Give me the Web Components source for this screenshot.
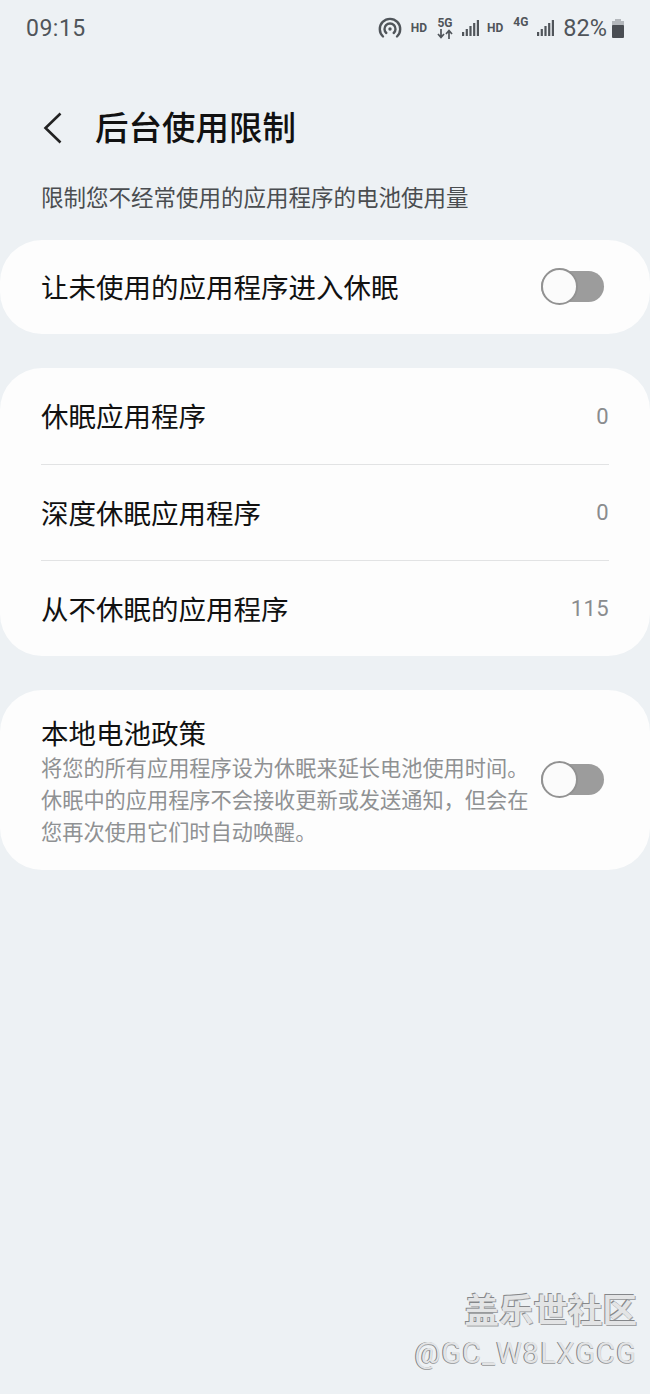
<!DOCTYPE html>
<html lang="zh">
<head>
<meta charset="utf-8">
<style>
  html, body { margin: 0; padding: 0; }
  body {
    width: 650px; height: 1394px; overflow: hidden; position: relative;
    background: #edf1f4; color: #111;
    font-family: "Noto Sans CJK SC", "Roboto", sans-serif;
  }
</style>
</head>
<body>
<status-bar></status-bar>
<page-header title="后台使用限制"></page-header>
<p-note>限制您不经常使用的应用程序的电池使用量</p-note>

<setting-card>
  <setting-row class="single" toggle>让未使用的应用程序进入休眠</setting-row>
</setting-card>

<setting-card style="margin-top:34px">
  <setting-row value="0">休眠应用程序</setting-row>
  <setting-row value="0" divider>深度休眠应用程序</setting-row>
  <setting-row value="115" divider>从不休眠的应用程序</setting-row>
</setting-card>

<setting-card style="margin-top:34px">
  <policy-row heading="本地电池政策">将您的所有应用程序设为休眠来延长电池使用时间。休眠中的应用程序不会接收更新或发送通知，但会在您再次使用它们时自动唤醒。</policy-row>
</setting-card>

<water-mark></water-mark>

<script>
class StatusBar extends HTMLElement {
  connectedCallback() {
    this.attachShadow({ mode: 'open' });
    const bars = `<svg width="17" height="18" viewBox="0 0 17 18" fill="#50555a"><rect x="0" y="13" width="2.200" height="4"/><rect x="3.700" y="10" width="2.200" height="7"/><rect x="7.400" y="7" width="2.200" height="10"/><rect x="11.100" y="4" width="2.200" height="13"/><rect x="14.800" y="1" width="2.200" height="16"/></svg>`;
    this.shadowRoot.innerHTML = `
      <style>
        :host { display: flex; align-items: center; height: 56px; padding: 0 25px 0 26px; color: #50555a; font-family: Roboto, sans-serif; }
        .time { font-size: 23px; letter-spacing: .5px; }
        .right { margin-left: auto; display: flex; align-items: center; }
        .hd { font-size: 12px; font-weight: 700; }
        .pct { font-size: 23.500px; margin-left: 9px; }
        .net { display: flex; flex-direction: column; align-items: center; font-size: 12px; font-weight: 700; line-height: 11px; }
      </style>
      <span class="time">09:15</span>
      <div class="right">
        <svg width="24" height="24" viewBox="0 0 24 24" fill="none" stroke="#50555a" stroke-width="2.400" stroke-linecap="round">
          <path d="M5 20.500A10.200 10.200 0 1 1 19 20.500"/>
          <path d="M8.300 17A5.500 5.500 0 1 1 15.700 17"/>
          <circle cx="12" cy="13" r="1.700" fill="#50555a" stroke="none"/>
        </svg>
        <span class="hd" style="margin-left:9px">HD</span>
        <span class="net" style="margin-left:10px">5G
          <svg width="16" height="10" viewBox="0 0 16 10" fill="none" stroke="#50555a" stroke-width="1.700"><path d="M4 0V8M1 5L4 8.500L7 5"/><path d="M12 10V2M9 5L12 1.500L15 5"/></svg>
        </span>
        <span style="margin-left:9px;display:flex">${bars}</span>
        <span class="hd" style="margin-left:8px">HD</span>
        <span class="net" style="margin:-12px 0 0 10px">4G</span>
        <span style="margin-left:9px;display:flex">${bars}</span>
        <span class="pct">82%</span>
        <svg width="14" height="20" viewBox="0 0 14 20" style="margin-left:4px;margin-top:2px"><rect x="4" y="0" width="6" height="3" fill="#b4b8bc"/><rect x="1" y="2" width="12" height="5" fill="#b4b8bc"/><rect x="1" y="6" width="12" height="13" rx="1" fill="#4a4e53"/></svg>
      </div>`;
  }
}
class PageHeader extends HTMLElement {
  connectedCallback() {
    this.attachShadow({ mode: 'open' });
    this.shadowRoot.innerHTML = `
      <style>
        :host { display: flex; align-items: center; height: 46px; margin-top: 49px; padding-left: 43px; }
        svg { display: block; flex: none; }
        h1 { margin: -4px 0 0 33px; font-size: 33.500px; font-weight: 500; line-height: 46px; color: #111; }
      </style>
      <svg width="19" height="32" viewBox="0 0 19 32" fill="none" stroke="#222" stroke-width="2.600"><path d="M17.500 1.500L2.500 16L17.500 30.500"/></svg>
      <h1>${this.getAttribute('title')}</h1>`;
  }
}
class PNote extends HTMLElement {
  connectedCallback() {
    this.attachShadow({ mode: 'open' });
    this.shadowRoot.innerHTML = `
      <style>:host { display: block; margin-top: 29px; padding-left: 41px; font-size: 22.500px; line-height: 32px; color: #4a4d50; white-space: nowrap; }</style>
      <slot></slot>`;
  }
}
class SettingCard extends HTMLElement {
  connectedCallback() {
    this.attachShadow({ mode: 'open' });
    this.shadowRoot.innerHTML = `
      <style>:host { display: block; background: #fdfdfd; border-radius: 42px; overflow: hidden; margin-top: 28px; }</style>
      <slot></slot>`;
  }
}
class ToggleSwitch extends HTMLElement {
  connectedCallback() {
    this.attachShadow({ mode: 'open' });
    this.shadowRoot.innerHTML = `
      <style>
        :host { display: block; position: relative; width: 63px; height: 31px; flex: none; background: #9c9c9c; border-radius: 16px; }
        i { position: absolute; left: 0; top: -3px; box-sizing: border-box; width: 37px; height: 37px; border-radius: 50%; background: #fbfbfb; border: 2px solid #929292; }
      </style>
      <i></i>`;
  }
}
class SettingRow extends HTMLElement {
  connectedCallback() {
    this.attachShadow({ mode: 'open' });
    const value = this.getAttribute('value');
    const tall = this.classList.contains('single') ? 94 : 96;
    this.shadowRoot.innerHTML = `
      <style>
        :host { display: block; padding: 0 41px; }
        .in { display: flex; align-items: center; justify-content: space-between; height: ${tall}px; box-sizing: border-box; font-size: 27.500px; color: #111; white-space: nowrap; }
        .in.line { border-top: 1px solid #e2e3e4; }
        .t { margin-top: -2px; }
        .v { font-family: Roboto, sans-serif; font-size: 22px; color: #8a8c8e; letter-spacing: .4px; }
        toggle-switch { margin-right: 5px; margin-top: -1px; }
      </style>
      <div class="in ${this.hasAttribute('divider') ? 'line' : ''}">
        <span class="t"><slot></slot></span>
        ${value !== null ? `<span class="v">${value}</span>` : ''}
        ${this.hasAttribute('toggle') ? '<toggle-switch></toggle-switch>' : ''}
      </div>`;
  }
}
class PolicyRow extends HTMLElement {
  connectedCallback() {
    this.attachShadow({ mode: 'open' });
    this.shadowRoot.innerHTML = `
      <style>
        :host { display: flex; align-items: center; height: 180px; box-sizing: border-box; padding: 0 46px 0 41px; gap: 11px; }
        .txt { flex: 1; min-width: 0; }
        .h { font-size: 27.500px; line-height: 36px; color: #111; }
        .d { font-size: 21.200px; line-height: 32px; color: #8f9193; margin-top: 1px; }
        toggle-switch { margin-top: -2px; }
      </style>
      <div class="txt">
        <div class="h">${this.getAttribute('heading')}</div>
        <div class="d"><slot></slot></div>
      </div>
      <toggle-switch></toggle-switch>`;
  }
}
class WaterMark extends HTMLElement {
  connectedCallback() {
    this.attachShadow({ mode: 'open' });
    this.shadowRoot.innerHTML = `
      <style>
        :host { position: absolute; right: 13px; top: 1285px; text-align: right; color: #e3e4e5; white-space: nowrap; }
        .a { font-size: 34.500px; line-height: 46px; font-weight: 700; text-shadow: -1px -1px 0 #85878a, 1px 1px 0 #a0a2a4; }
        .b { font-family: Roboto, sans-serif; font-size: 29px; line-height: 44px; letter-spacing: 1px; text-shadow: -1px 0 0 #7d7f82, 0 1px 0 #a4a6a8; }
      </style>
      <div class="a">盖乐世社区</div>
      <div class="b">@GC_W8LXGCG</div>`;
  }
}
customElements.define('status-bar', StatusBar);
customElements.define('page-header', PageHeader);
customElements.define('p-note', PNote);
customElements.define('setting-card', SettingCard);
customElements.define('toggle-switch', ToggleSwitch);
customElements.define('setting-row', SettingRow);
customElements.define('policy-row', PolicyRow);
customElements.define('water-mark', WaterMark);
</script>
</body>
</html>
